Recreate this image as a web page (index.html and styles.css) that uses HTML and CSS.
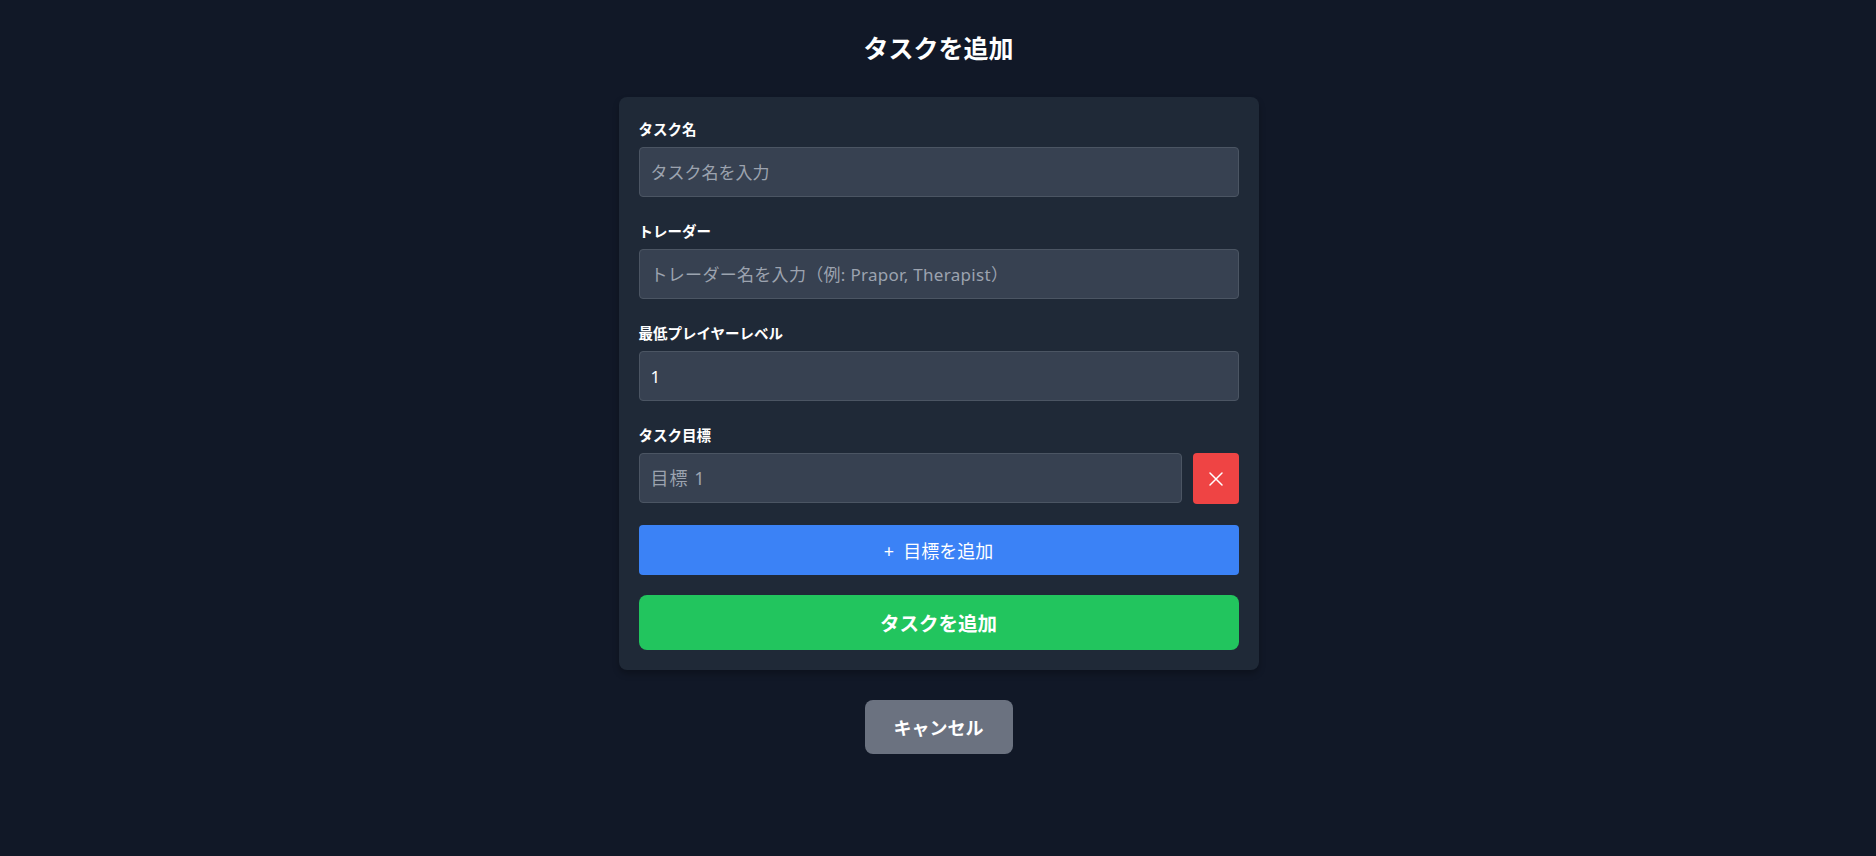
FILE: index.html
```html
<!DOCTYPE html>
<html lang="ja">
<head>
<meta charset="utf-8">
<title>タスクを追加</title>
<link rel="stylesheet" href="styles.css">
</head>
<body>
<main class="page">
  <h1 class="title">タスクを追加</h1>
  <form class="card">
    <div class="field">
      <label class="label">タスク名</label>
      <input class="input" type="text" placeholder="タスク名を入力">
    </div>
    <div class="field">
      <label class="label">トレーダー</label>
      <input class="input input-wide" type="text" placeholder="トレーダー名を入力（例: Prapor, Therapist）">
    </div>
    <div class="field">
      <label class="label">最低プレイヤーレベル</label>
      <input class="input" type="number" value="1">
    </div>
    <div class="field field-obj">
      <label class="label">タスク目標</label>
      <div class="obj-row">
        <input class="input obj-input" type="text" placeholder="目標 1">
        <button type="button" class="btn-remove" aria-label="削除">
          <svg width="14" height="14" viewBox="0 0 14 14" fill="none" stroke="#ffffff" stroke-width="1.5" stroke-linecap="round"><path d="M1 1L13 13M13 1L1 13"/></svg>
        </button>
      </div>
    </div>
    <button type="button" class="btn-add-obj">+&nbsp; 目標を追加</button>
    <button type="button" class="btn-submit">タスクを追加</button>
  </form>
  <button type="button" class="btn-cancel">キャンセル</button>
</main>
</body>
</html>
```

FILE: styles.css
```css
* { box-sizing: border-box; }
html, body {
  margin: 0;
  padding: 0;
  background: #111827;
  color: #ffffff;
  font-family: "Noto Sans", "Noto Sans CJK JP", "Liberation Sans", sans-serif;
}
.page {
  display: flex;
  flex-direction: column;
  align-items: center;
  padding: 32px 0 0 1px;
  min-height: 856px;
}
.title {
  margin: 0 0 33px;
  font-size: 25px;
  line-height: 32px;
  font-weight: 700;
}
.card {
  width: 640px;
  background: #1f2937;
  border-radius: 8px;
  padding: 22px 20px 20px;
  display: flex;
  flex-direction: column;
  box-shadow: 0 4px 6px rgba(0,0,0,0.25);
}
.field {
  display: flex;
  flex-direction: column;
  margin-bottom: 24px;
}
.field-obj { margin-bottom: 21px; }
.label {
  font-size: 14.5px;
  line-height: 20px;
  font-weight: 700;
  margin-bottom: 8px;
}
.input {
  height: 50px;
  width: 100%;
  background: #374151;
  border: 1px solid #4b5563;
  border-radius: 4px;
  padding: 0 11px;
  color: #ffffff;
  font-family: inherit;
  font-size: 17px;
  outline: none;
}
.input-wide { letter-spacing: 0.3px; }
.input::placeholder { color: #9ca3af; }
.input[type=number]::-webkit-inner-spin-button,
.input[type=number]::-webkit-outer-spin-button { -webkit-appearance: none; margin: 0; }
.obj-row {
  display: flex;
  gap: 11px;
}
.obj-input {
  flex: 1;
  width: auto;
  font-size: 18px;
  letter-spacing: 1px;
}
.btn-remove {
  width: 46px;
  height: 51px;
  flex: none;
  background: #ef4444;
  border: none;
  border-radius: 4px;
  display: flex;
  align-items: center;
  justify-content: center;
  padding: 0;
}
.btn-add-obj {
  height: 50px;
  background: #3b82f6;
  color: #ffffff;
  border: none;
  border-radius: 4px;
  font-family: inherit;
  font-size: 18px;
  margin-bottom: 20px;
}
.btn-submit {
  height: 55px;
  background: #22c55e;
  color: #ffffff;
  border: none;
  border-radius: 8px;
  font-family: inherit;
  font-size: 19.5px;
  font-weight: 700;
}
.btn-cancel {
  margin-top: 30px;
  width: 148px;
  height: 54px;
  background: #6b7280;
  color: #ffffff;
  border: none;
  border-radius: 8px;
  font-family: inherit;
  font-size: 18px;
  font-weight: 700;
}
```
